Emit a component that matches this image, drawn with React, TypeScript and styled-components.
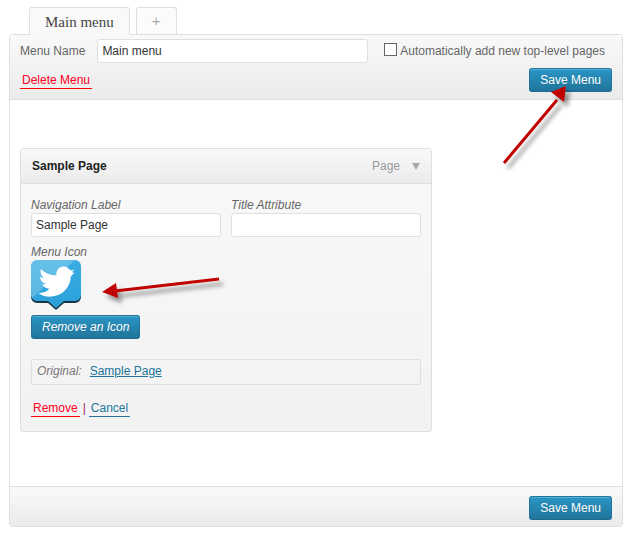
import React, { useState } from "react";
import styled, { createGlobalStyle } from "styled-components";

const GlobalStyle = createGlobalStyle`
  *, *::before, *::after { box-sizing: border-box; }
  body {
    margin: 0;
    background: #fff;
    color: #666;
    font: 12px/16px "Liberation Sans", Arial, sans-serif;
  }
  button, input { font: inherit; }
`;

const Page = styled.main`
  padding: 7px 11px 12px 9px;
`;

const Tabs = styled.nav`
  display: flex;
  gap: 6px;
  padding-left: 20px;
`;

const Tab = styled.button<{ $active?: boolean }>`
  height: ${(p) => (p.$active ? 28 : 27)}px;
  margin-bottom: ${(p) => (p.$active ? -1 : 0)}px;
  padding: 0 15px;
  position: relative;
  border: 1px solid #dfdfdf;
  border-bottom: 0;
  border-radius: 3px 3px 0 0;
  background: ${(p) => (p.$active ? "#f9f9f9" : "#fbfbfb")};
  color: ${(p) => (p.$active ? "#464646" : "#aaa")};
  font-family: ${(p) =>
    p.$active ? '"Liberation Serif", serif' : '"Liberation Sans", sans-serif'};
  font-size: 15px;
  line-height: 24px;
`;

const Panel = styled.form`
  border: 1px solid #dfdfdf;
  border-radius: 3px;
  background: #fff;
`;

const PanelHeader = styled.header`
  display: flex;
  flex-direction: column;
  gap: 5px;
  padding: 4px 10px 7px;
  border-bottom: 1px solid #dfdfdf;
  background: linear-gradient(#f9f9f9, #ebebeb);
`;

const Row = styled.div`
  display: flex;
  align-items: center;
  justify-content: space-between;
`;

const NameLabel = styled.label`
  display: flex;
  flex: 1;
  align-items: center;
  gap: 12px;
`;

const TextInput = styled.input`
  display: block;
  flex: 1;
  width: 100%;
  min-width: 0;
  height: 24px;
  padding: 0 4px;
  border: 1px solid #dfdfdf;
  border-radius: 3px;
  background: #fff;
  color: #333;
  font-style: normal;
`;

const CheckLabel = styled.label`
  display: flex;
  align-items: center;
  gap: 3px;
  margin: 0 7px 0 16px;
  white-space: nowrap;
`;

const Checkbox = styled.input`
  appearance: none;
  width: 13px;
  height: 13px;
  margin: 0 0 4px;
  border: 1px solid #666;
  background: #fff;
  &:checked { background: #2a95c5; }
`;

const ActionLink = styled.a<{ $danger?: boolean }>`
  display: inline-block;
  padding: 0 2px;
  border-bottom: 1px solid ${(p) => (p.$danger ? "#f00" : "#21759b")};
  color: ${(p) => (p.$danger ? "#ff0020" : "#21759b")};
  text-decoration: none;
`;

const PrimaryButton = styled.button<{ $italic?: boolean }>`
  display: block;
  height: 24px;
  padding: 0 10px;
  border: 1px solid #21759b;
  border-bottom-color: #1e6a8d;
  border-radius: 3px;
  background: linear-gradient(#2a95c5, #21759b);
  box-shadow: inset 0 1px 0 rgba(120, 200, 230, 0.5);
  color: #fff;
  font-style: ${(p) => (p.$italic ? "italic" : "normal")};
  line-height: 22px;
  text-shadow: 0 1px 0 rgba(0, 0, 0, 0.1);
`;

const PanelBody = styled.div`
  padding: 48px 10px 54px;
`;

const MenuItem = styled.section`
  width: 100%;
  max-width: 412px;
  border: 1px solid #dfdfdf;
  border-radius: 3px;
  background: linear-gradient(#f9f9f9, #f2f2f2);
`;

const ItemHeader = styled.header`
  display: flex;
  align-items: center;
  justify-content: space-between;
  height: 35px;
  padding: 0 11px;
  border-bottom: 1px solid #dfdfdf;
  background: linear-gradient(#f9f9f9, #ebebeb);
`;

const ItemTitle = styled.h3`
  margin: 0;
  color: #222;
  font-size: 12px;
`;

const ItemToggle = styled.button`
  display: flex;
  align-items: center;
  gap: 12px;
  padding: 0;
  border: 0;
  background: none;
  color: #999;
`;

const ItemBody = styled.div`
  padding: 13px 10px 14px;
`;

const Fields = styled.div`
  display: grid;
  grid-template-columns: 1fr 1fr;
  gap: 10px;
  margin-bottom: 7px;
`;

const Field = styled.label`
  display: block;
  font-style: italic;
`;

const IconField = styled.div`
  font-style: italic;
`;

const IconRow = styled.div`
  position: relative;
  width: 50px;
  height: 50px;
  margin-bottom: 5px;
  svg { display: block; }
`;

const Original = styled.p`
  display: flex;
  gap: 8px;
  margin: 20px 0 15px;
  padding: 3px 5px 5px;
  border: 1px solid #dfdfdf;
  border-radius: 2px;
  color: #777;
  font-style: italic;
  a { color: #21759b; font-style: normal; }
`;

const ItemActions = styled.div`
  display: flex;
  gap: 3px;
  color: #a0206a;
`;

const PanelFooter = styled.footer`
  display: flex;
  justify-content: flex-end;
  padding: 9px 10px 6px;
  border-top: 1px solid #dfdfdf;
  background: linear-gradient(#f9f9f9, #ebebeb);
`;

const ButtonAnchor = styled.div`
  position: relative;
`;

const Pointer = styled.svg<{ $left: number; $top: number }>`
  position: absolute;
  left: ${(p) => p.$left}px;
  top: ${(p) => p.$top}px;
  overflow: visible;
  pointer-events: none;
  filter: drop-shadow(4px 5px 2px rgba(0, 0, 0, 0.4));
`;

const TwitterIcon = () => (
  <svg width="50" height="50" viewBox="0 0 50 50" role="img" aria-label="Twitter">
    <defs>
      <linearGradient id="sky" x1="0" y1="0" x2="0" y2="1">
        <stop offset="0" stopColor="#3aaee3" />
        <stop offset="1" stopColor="#2b9fd9" />
      </linearGradient>
      <clipPath id="bubble">
        <path d="M6 0H44a6 6 0 0 1 6 6V35a6 6 0 0 1-6 6H33L25 48 17 41H6a6 6 0 0 1-6-6V6a6 6 0 0 1 6-6z" />
      </clipPath>
    </defs>
    <path
      fill="#173647"
      d="M6 2H44a6 6 0 0 1 6 6V37a6 6 0 0 1-6 6H33L25 50 17 43H6a6 6 0 0 1-6-6V8a6 6 0 0 1 6-6z"
    />
    <g clipPath="url(#bubble)">
      <path fill="url(#sky)" d="M0 0H50V50H0z" />
      <path fill="#fff" opacity=".22" d="M0 0H44L0 39z" />
    </g>
    <path
      fill="#fff"
      d="M43.3 12.6C42.3 12.6 41.4 12.5 40.6 12.2 41.9 11.5 42.7 10.6 43 9.4 41.8 10.1 40.6 10.3 39.2 10.2 37.4 7.4 34.6 6 31.6 6.5 27.4 7.2 25 10.8 25.4 15.2 19.8 15.5 14.4 13.2 9.8 8.9 9 12.4 10 15.8 13 17.6 11.5 17.7 10.2 17.5 8.9 17 9.4 20.5 11.6 23 15.2 23.8 14 24.4 12.7 24.7 11.4 24.6 12.9 27.4 15.4 28.9 18.5 28.7 15.6 31.6 11.9 33 7.6 33.2 12.9 36.8 19.3 37.7 25.6 35.6 34.3 32.7 39.5 25.2 39.8 16.2 41.2 15.2 42.4 14 43.3 12.6z"
    />
  </svg>
);

export default function App() {
  const [menuName, setMenuName] = useState("Main menu");
  const [label, setLabel] = useState("Sample Page");
  const [title, setTitle] = useState("");

  return (
    <>
      <GlobalStyle />
      <Page>
        <Tabs aria-label="Menus">
          <Tab type="button" $active>Main menu</Tab>
          <Tab type="button">+</Tab>
        </Tabs>
        <Panel onSubmit={(e) => e.preventDefault()}>
          <PanelHeader>
            <Row>
              <NameLabel>
                Menu Name
                <TextInput value={menuName} onChange={(e) => setMenuName(e.target.value)} />
              </NameLabel>
              <CheckLabel>
                <Checkbox type="checkbox" />
                Automatically add new top-level pages
              </CheckLabel>
            </Row>
            <Row>
              <ActionLink href="#delete" $danger>Delete Menu</ActionLink>
              <ButtonAnchor>
                <PrimaryButton type="submit">Save Menu</PrimaryButton>
                <Pointer $left={-28} $top={18} width="66" height="80" viewBox="0 0 66 80" aria-hidden="true">
                  <path d="M3 77L56 14" stroke="#c00000" strokeWidth="3" />
                  <path d="M65 0L63 16 50 6z" fill="#c00000" />
                </Pointer>
              </ButtonAnchor>
            </Row>
          </PanelHeader>
          <PanelBody>
            <MenuItem>
              <ItemHeader>
                <ItemTitle>Sample Page</ItemTitle>
                <ItemToggle type="button">
                  Page
                  <svg width="8" height="8" viewBox="0 0 8 8" aria-hidden="true">
                    <path d="M0 1H8L4 8z" fill="#aaa" />
                  </svg>
                </ItemToggle>
              </ItemHeader>
              <ItemBody>
                <Fields>
                  <Field>
                    Navigation Label
                    <TextInput value={label} onChange={(e) => setLabel(e.target.value)} />
                  </Field>
                  <Field>
                    Title Attribute
                    <TextInput value={title} onChange={(e) => setTitle(e.target.value)} />
                  </Field>
                </Fields>
                <IconField>
                  Menu Icon
                  <IconRow>
                    <TwitterIcon />
                    <Pointer $left={70} $top={17} width="120" height="24" viewBox="0 0 120 24" aria-hidden="true">
                      <path d="M14 14L118 2" stroke="#c00000" strokeWidth="3" />
                      <path d="M1 15L15 6 17 21z" fill="#c00000" />
                    </Pointer>
                  </IconRow>
                  <PrimaryButton type="button" $italic>Remove an Icon</PrimaryButton>
                </IconField>
                <Original>
                  Original: <a href="#sample-page">Sample Page</a>
                </Original>
                <ItemActions>
                  <ActionLink href="#remove" $danger>Remove</ActionLink>|
                  <ActionLink href="#cancel">Cancel</ActionLink>
                </ItemActions>
              </ItemBody>
            </MenuItem>
          </PanelBody>
          <PanelFooter>
            <PrimaryButton type="submit">Save Menu</PrimaryButton>
          </PanelFooter>
        </Panel>
      </Page>
    </>
  );
}
